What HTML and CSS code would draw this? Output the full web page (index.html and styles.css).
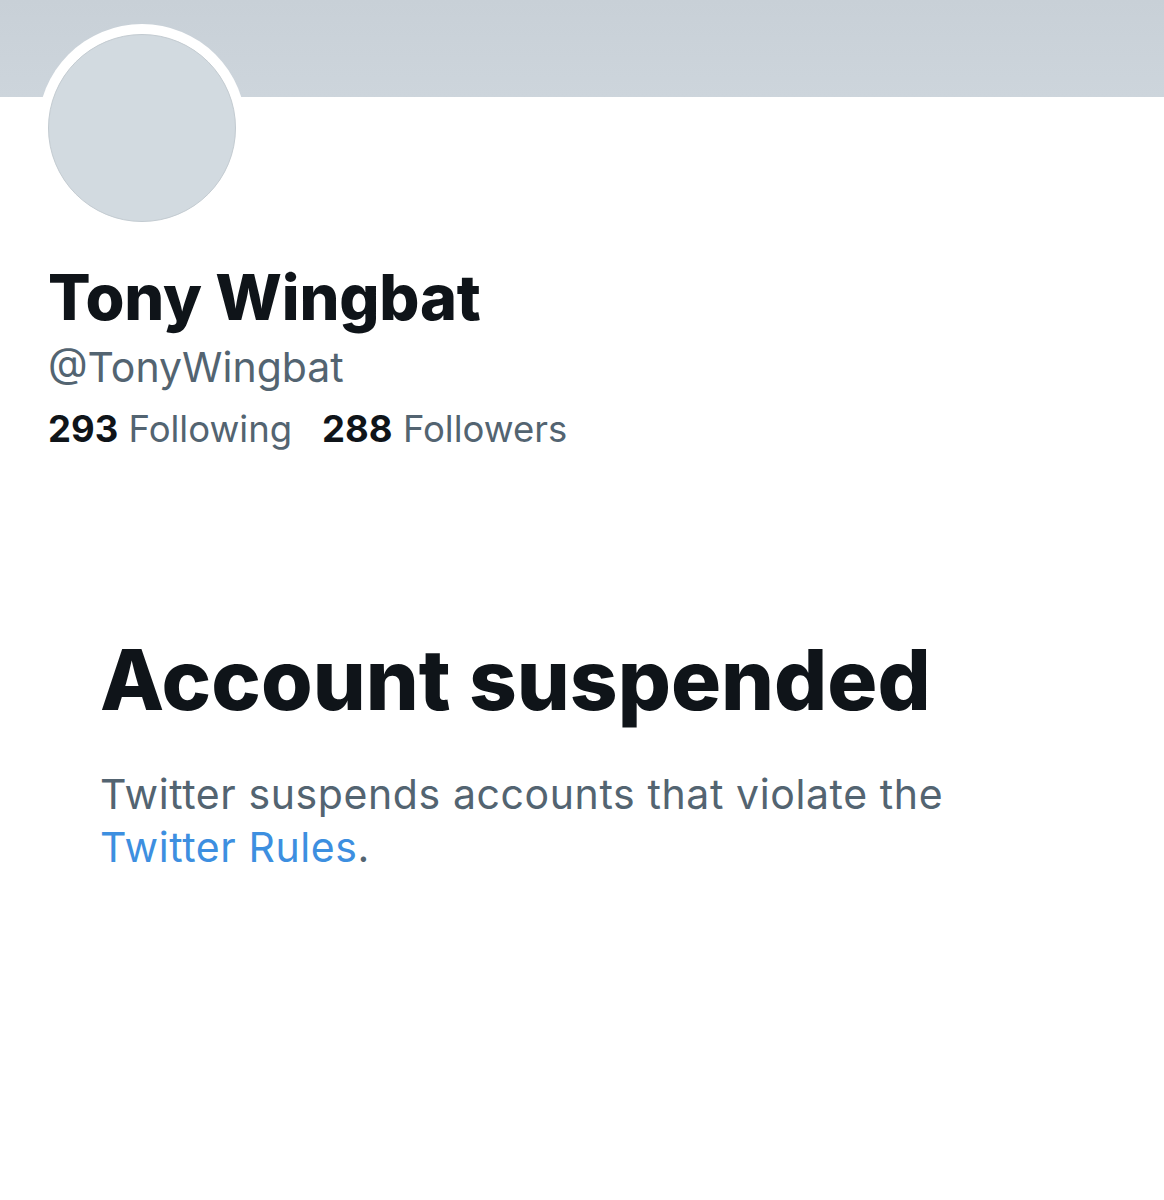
FILE: index.html
```html
<!DOCTYPE html>
<html>
<head>
<meta charset="utf-8">
<link rel="stylesheet" href="styles.css">
</head>
<body>
<div class="page">
  <header class="banner"></header>
  <section class="profile">
    <div class="avatar-wrap"><div class="avatar"></div></div>
    <h1 class="name">Tony Wingbat</h1>
    <div class="handle">@TonyWingbat</div>
    <div class="stats">
      <span class="stat"><b>293</b> Following</span>
      <span class="stat"><b>288</b> Followers</span>
    </div>
  </section>
  <section class="suspended">
    <h2 class="title">Account suspended</h2>
    <p class="desc">Twitter suspends accounts that violate the <a class="link" href="#">Twitter Rules</a>.</p>
  </section>
</div>
</body>
</html>
```
FILE: styles.css
```css
html, body {
  margin: 0;
  padding: 0;
  background: #ffffff;
}
body {
  font-family: Inter, "Liberation Sans", Arial, sans-serif;
  color: #0f1419;
}
.page {
  width: 1164px;
  height: 1200px;
  overflow: hidden;
}
.banner {
  height: 97px;
  background: linear-gradient(180deg, #c8d0d7 0%, #cdd5dc 100%);
}
.profile {
  padding: 0 48px;
}
.avatar-wrap {
  width: 208px;
  height: 208px;
  margin-top: -73px;
  margin-left: -10px;
  border-radius: 50%;
  background: #ffffff;
  display: flex;
  align-items: center;
  justify-content: center;
}
.avatar {
  width: 186px;
  height: 186px;
  border-radius: 50%;
  background: #d2dae0;
  border: 1px solid #c3cbd1;
}
.name {
  margin: 27px 0 0 0;
  font-size: 63px;
  font-weight: 800;
  line-height: 76px;
  letter-spacing: -0.2px;
}
.handle {
  margin-top: 4px;
  font-size: 41px;
  line-height: 56px;
  color: #536471;
}
.stats {
  display: flex;
  gap: 30px;
  margin-top: 4px;
  font-size: 36.5px;
  line-height: 60px;
  color: #536471;
}
.stats b {
  color: #0f1419;
  font-weight: 700;
}
.suspended {
  padding: 0 101px 0 100px;
  margin-top: 171px;
}
.title {
  margin: 0;
  font-size: 83.5px;
  font-weight: 800;
  line-height: 100px;
}
.desc {
  margin: 38px 0 0 0;
  max-width: 900px;
  font-size: 41px;
  letter-spacing: 0.6px;
  line-height: 53px;
  color: #536471;
}
.link {
  color: #3d8fe0;
  text-decoration: none;
}
```
